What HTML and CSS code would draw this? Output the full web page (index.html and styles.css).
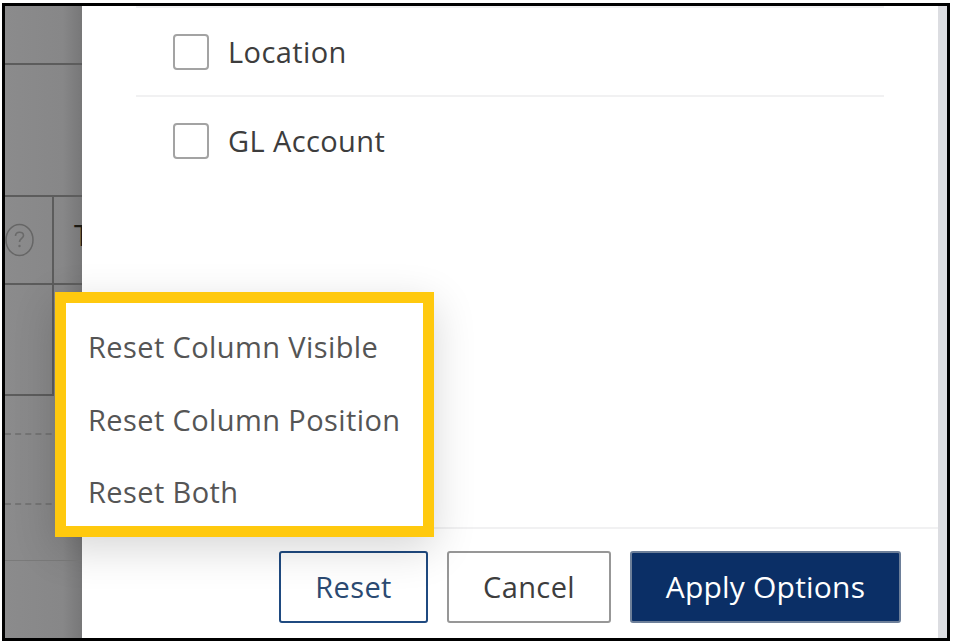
FILE: index.html
```html
<!DOCTYPE html>
<html lang="en">

<head>
  <meta charset="UTF-8">
  <title>Reset Options</title>
  <link rel="stylesheet" href="styles.css">
</head>

<body>
  <div class="frame">

    <!-- Table behind the overlay -->
    <div class="backdrop">
      <div class="bg-row bg-row-1"></div>
      <div class="bg-row bg-row-2"></div>
      <div class="bg-row bg-row-3">
        <div class="bg-cell bg-cell-help">
          <svg class="help-icon" width="30" height="34" viewBox="0 0 30 34">
            <ellipse cx="14.500" cy="17" rx="13.500" ry="15.500" fill="none" stroke="#666" stroke-width="1.500" />
            <path d="M10.500 13c0-5 8-5 8-.5 0 3-4 3-4 6.500" fill="none" stroke="#6a6a6a" stroke-width="1.600" />
            <circle cx="14.500" cy="23" r="1.200" fill="#6a6a6a" />
          </svg>
        </div>
        <div class="bg-cell bg-cell-title">T</div>
      </div>
      <div class="bg-row bg-row-4"><div class="bg-cell bg-cell-empty"></div></div>
      <div class="bg-row bg-row-5"></div>
      <div class="bg-row bg-row-6"></div>
      <div class="bg-row bg-row-7"></div>
    </div>

    <!-- Options panel -->
    <div class="panel">
      <div class="panel-body">
        <div class="panel-rule"></div>
        <label class="option">
          <span class="checkbox"></span>
          <span class="option-label">Location</span>
        </label>
        <label class="option option-ruled">
          <span class="checkbox"></span>
          <span class="option-label">GL Account</span>
        </label>
      </div>

      <div class="panel-footer">
        <button class="btn btn-reset">Reset</button>
        <button class="btn btn-cancel">Cancel</button>
        <button class="btn btn-apply">Apply Options</button>
      </div>
    </div>

    <div class="scrollbar"></div>

    <!-- Reset menu, highlighted -->
    <div class="reset-menu">
      <div class="reset-item">Reset Column Visible</div>
      <div class="reset-item">Reset Column Position</div>
      <div class="reset-item">Reset Both</div>
    </div>

  </div>
</body>

</html>
```

FILE: styles.css
```css
html,
body {
  margin: 0;
  padding: 0;
  background: #fff;
}

body {
  height: 641px;
  overflow: hidden;
  font-family: "Open Sans", "Noto Sans", sans-serif;
}

.frame {
  position: relative;
  display: flex;
  box-sizing: border-box;
  width: 948px;
  height: 638px;
  margin: 3px 0 0 2px;
  border: 3px solid #000;
  background: #fff;
  overflow: hidden;
}

/* table behind the overlay */
.backdrop {
  display: flex;
  flex-direction: column;
  flex: none;
  width: 77px;
  background: linear-gradient(to right, #8b8b8c 0%, #878788 75%, #777778 100%);
}

.bg-row {
  display: flex;
  flex: none;
  box-sizing: border-box;
  border-bottom: 2px solid #5c5c5c;
}

.bg-row-1 {
  height: 59px;
}

.bg-row-2 {
  height: 132px;
}

.bg-row-3 {
  height: 88px;
}

.bg-row-4 {
  height: 111px;
  border-bottom: 0;
}

.bg-row-5 {
  height: 39px;
  border-bottom: 2px dashed #747474;
}

.bg-row-6 {
  height: 70px;
  border-bottom: 2px dashed #747474;
}

.bg-row-7 {
  height: 56px;
  border-bottom: 1px solid #7a7a7a;
}

.bg-cell {
  box-sizing: border-box;
}

.bg-cell-help {
  display: flex;
  flex: none;
  align-items: center;
  width: 49px;
  border-right: 2px solid #5c5c5c;
}

.bg-cell-title {
  padding: 23px 0 0 20px;
  font-size: 29px;
  line-height: 30px;
  color: #1c1a14;
}

.bg-cell-empty {
  flex: none;
  width: 49px;
  height: 111px;
  border-right: 2px solid #5c5c5c;
  border-bottom: 2px solid #5c5c5c;
}

/* options panel */
.panel {
  display: flex;
  flex-direction: column;
  flex: 1;
  background: #fff;
}

.panel-body {
  flex: 1;
  padding: 0 54px;
}

.panel-rule {
  height: 2px;
  background: #f1f1f2;
}

.option {
  display: flex;
  align-items: center;
  gap: 19px;
  height: 87px;
  padding-left: 37px;
}

.option-ruled {
  border-top: 2px solid #f1f1f2;
}

.checkbox {
  box-sizing: border-box;
  width: 36px;
  height: 36px;
  border: 2px solid #a3a3a3;
  border-radius: 4px;
  background: #fff;
}

.option-label {
  font-size: 29px;
  letter-spacing: 0.4px;
  color: #3d3d3d;
}

.panel-footer {
  display: flex;
  justify-content: flex-end;
  gap: 19px;
  height: 111px;
  box-sizing: border-box;
  padding: 22px 37px 0 0;
  border-top: 2px solid #f1f1f2;
}

.btn {
  box-sizing: border-box;
  height: 72px;
  padding: 0 0 2px;
  border-radius: 3px;
  font-family: inherit;
  font-size: 29px;
  letter-spacing: 0.4px;
  background: #fff;
}

.btn-reset {
  width: 149px;
  border: 2px solid #1f4a80;
  color: #2b4a72;
}

.btn-cancel {
  width: 164px;
  border: 2px solid #979797;
  color: #3d3d3d;
}

.btn-apply {
  width: 271px;
  border: 2px solid #6d7f99;
  background: #0b2f66;
  color: #fff;
  font-size: 30px;
  letter-spacing: 0.2px;
}

.scrollbar {
  flex: none;
  width: 9px;
  background: #dcdde1;
}

/* highlighted reset menu */
.reset-menu {
  position: absolute;
  left: 50px;
  top: 286px;
  box-sizing: border-box;
  width: 379px;
  height: 245px;
  padding: 24px 0 0 22px;
  border: 11px solid #ffc90e;
  background: #fff;
  box-shadow: 0 12px 40px rgba(0, 0, 0, 0.16);
}

.reset-item {
  height: 72.5px;
  font-size: 29px;
  letter-spacing: 0.4px;
  line-height: 40px;
  color: #555;
  white-space: nowrap;
}
```
